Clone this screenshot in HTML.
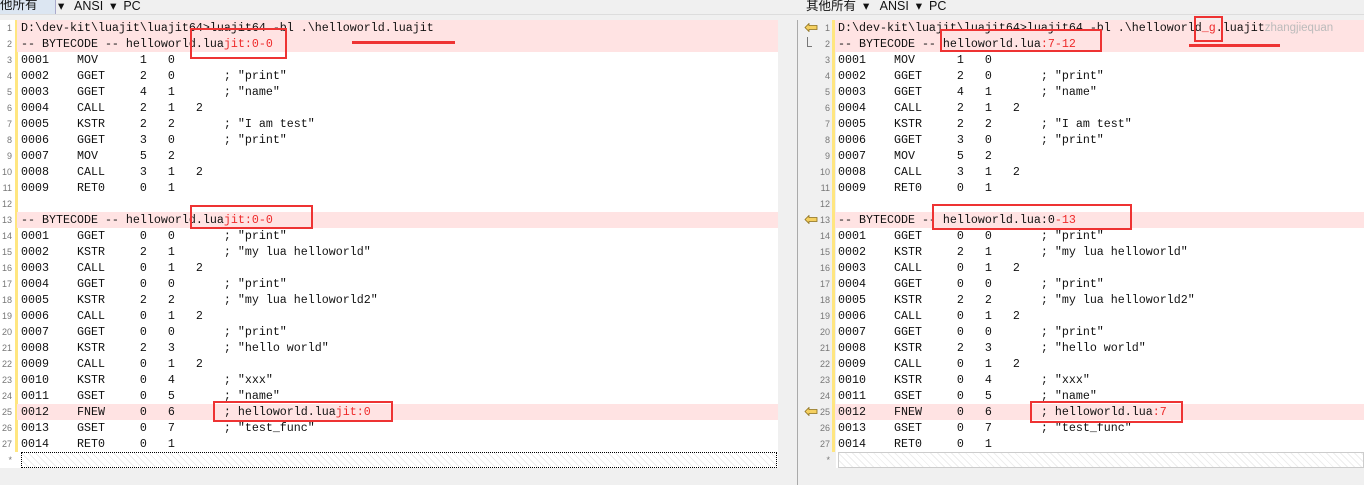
<!DOCTYPE html>
<html><head><meta charset="utf-8"><style>
*{margin:0;padding:0;box-sizing:border-box}
body{width:1364px;height:485px;background:#f0f0f0;position:relative;overflow:hidden;font-family:"Liberation Sans","Noto Sans CJK SC",sans-serif}
.top{position:absolute;top:0;height:14px;font-size:12.5px;color:#111;line-height:12px}
.panel{position:absolute;top:20px;background:#fff;height:448px}
.ln{position:absolute;height:16px;line-height:16px;font-family:"Liberation Mono",monospace;font-size:11.67px;color:#111;white-space:pre}
.pk{background:#ffe3e3}
.num{height:16px;line-height:16px;font-family:"Liberation Sans",sans-serif;font-size:9px;color:#777;text-align:right}
.r{color:#ee2a2a}
.box{position:absolute;border:2.5px solid #ee3333}
.bar{position:absolute;background:#ee3333;height:3px}
.yb{position:absolute;background:#ffe680;width:3px}
.arrow{position:absolute;width:14px;height:9px}
</style></head><body>
<div class="top" style="left:0;width:56px;background:#dce6f2;border-right:1px solid #aac"><span style="position:relative;top:-1px">他所有</span></div>
<div class="top" style="left:58px;">▾ &nbsp; ANSI &nbsp;▾ &nbsp;PC</div>
<div class="top" style="left:806px;">其他所有 &nbsp;▾ &nbsp; ANSI &nbsp;▾ &nbsp;PC</div>
<div style="position:absolute;left:0;top:14px;width:1364px;height:1px;background:#ddd"></div>
<div class="panel" style="left:0;width:778px;"></div>
<div class="yb" style="left:15px;top:20px;height:432px"></div>
<div style="position:absolute;left:797px;top:20px;width:1px;height:465px;background:#aaa"></div>
<div class="panel" style="left:836px;width:528px;"></div>
<div class="yb" style="left:832px;top:20px;height:432px"></div>
<div style="position:absolute;left:21px;top:452px;width:756px;height:16px;border:1px dotted #000;background:repeating-linear-gradient(45deg,#fff 0 4px,#eee 4px 5px)"></div>
<div style="position:absolute;left:838px;top:452px;width:526px;height:16px;border:1px solid #ccc;background:repeating-linear-gradient(45deg,#fff 0 4px,#eee 4px 5px)"></div>

<div class="ln pk" style="left:17px;top:20px;width:761px;padding-left:4px">D:\dev-kit\luajit\luajit64&gt;luajit64 -bl .\helloworld.luajit</div>
<div class="ln pk" style="left:17px;top:36px;width:761px;padding-left:4px">-- BYTECODE -- helloworld.lua<span class="r">jit:0-0</span></div>
<div class="ln" style="left:21px;top:52px">0001    MOV      1   0</div>
<div class="ln" style="left:21px;top:68px">0002    GGET     2   0       ; "print"</div>
<div class="ln" style="left:21px;top:84px">0003    GGET     4   1       ; "name"</div>
<div class="ln" style="left:21px;top:100px">0004    CALL     2   1   2</div>
<div class="ln" style="left:21px;top:116px">0005    KSTR     2   2       ; "I am test"</div>
<div class="ln" style="left:21px;top:132px">0006    GGET     3   0       ; "print"</div>
<div class="ln" style="left:21px;top:148px">0007    MOV      5   2</div>
<div class="ln" style="left:21px;top:164px">0008    CALL     3   1   2</div>
<div class="ln" style="left:21px;top:180px">0009    RET0     0   1</div>
<div class="ln pk" style="left:17px;top:212px;width:761px;padding-left:4px">-- BYTECODE -- helloworld.lua<span class="r">jit:0-0</span></div>
<div class="ln" style="left:21px;top:228px">0001    GGET     0   0       ; "print"</div>
<div class="ln" style="left:21px;top:244px">0002    KSTR     2   1       ; "my lua helloworld"</div>
<div class="ln" style="left:21px;top:260px">0003    CALL     0   1   2</div>
<div class="ln" style="left:21px;top:276px">0004    GGET     0   0       ; "print"</div>
<div class="ln" style="left:21px;top:292px">0005    KSTR     2   2       ; "my lua helloworld2"</div>
<div class="ln" style="left:21px;top:308px">0006    CALL     0   1   2</div>
<div class="ln" style="left:21px;top:324px">0007    GGET     0   0       ; "print"</div>
<div class="ln" style="left:21px;top:340px">0008    KSTR     2   3       ; "hello world"</div>
<div class="ln" style="left:21px;top:356px">0009    CALL     0   1   2</div>
<div class="ln" style="left:21px;top:372px">0010    KSTR     0   4       ; "xxx"</div>
<div class="ln" style="left:21px;top:388px">0011    GSET     0   5       ; "name"</div>
<div class="ln pk" style="left:17px;top:404px;width:761px;padding-left:4px">0012    FNEW     0   6       ; helloworld.lua<span class="r">jit:0</span></div>
<div class="ln" style="left:21px;top:420px">0013    GSET     0   7       ; "test_func"</div>
<div class="ln" style="left:21px;top:436px">0014    RET0     0   1</div>

<div class="ln pk" style="left:835px;top:20px;width:529px;padding-left:3px">D:\dev-kit\luajit\luajit64&gt;luajit64 -bl .\helloworld<span class="r">_g</span>.luajit<span style="color:#bbb;font-family:'Liberation Sans',sans-serif;font-size:11.5px">zhangjiequan</span></div>
<div class="ln pk" style="left:835px;top:36px;width:529px;padding-left:3px">-- BYTECODE -- helloworld.lua<span class="r">:7-12</span></div>
<div class="ln" style="left:838px;top:52px">0001    MOV      1   0</div>
<div class="ln" style="left:838px;top:68px">0002    GGET     2   0       ; "print"</div>
<div class="ln" style="left:838px;top:84px">0003    GGET     4   1       ; "name"</div>
<div class="ln" style="left:838px;top:100px">0004    CALL     2   1   2</div>
<div class="ln" style="left:838px;top:116px">0005    KSTR     2   2       ; "I am test"</div>
<div class="ln" style="left:838px;top:132px">0006    GGET     3   0       ; "print"</div>
<div class="ln" style="left:838px;top:148px">0007    MOV      5   2</div>
<div class="ln" style="left:838px;top:164px">0008    CALL     3   1   2</div>
<div class="ln" style="left:838px;top:180px">0009    RET0     0   1</div>
<div class="ln pk" style="left:835px;top:212px;width:529px;padding-left:3px">-- BYTECODE -- helloworld.lua:0<span class="r">-13</span></div>
<div class="ln" style="left:838px;top:228px">0001    GGET     0   0       ; "print"</div>
<div class="ln" style="left:838px;top:244px">0002    KSTR     2   1       ; "my lua helloworld"</div>
<div class="ln" style="left:838px;top:260px">0003    CALL     0   1   2</div>
<div class="ln" style="left:838px;top:276px">0004    GGET     0   0       ; "print"</div>
<div class="ln" style="left:838px;top:292px">0005    KSTR     2   2       ; "my lua helloworld2"</div>
<div class="ln" style="left:838px;top:308px">0006    CALL     0   1   2</div>
<div class="ln" style="left:838px;top:324px">0007    GGET     0   0       ; "print"</div>
<div class="ln" style="left:838px;top:340px">0008    KSTR     2   3       ; "hello world"</div>
<div class="ln" style="left:838px;top:356px">0009    CALL     0   1   2</div>
<div class="ln" style="left:838px;top:372px">0010    KSTR     0   4       ; "xxx"</div>
<div class="ln" style="left:838px;top:388px">0011    GSET     0   5       ; "name"</div>
<div class="ln pk" style="left:835px;top:404px;width:529px;padding-left:3px">0012    FNEW     0   6       ; helloworld.lua<span class="r">:7</span></div>
<div class="ln" style="left:838px;top:420px">0013    GSET     0   7       ; "test_func"</div>
<div class="ln" style="left:838px;top:436px">0014    RET0     0   1</div>

<div style="position:absolute;left:0;top:20px;width:12px">
<div class="num">1</div><div class="num">2</div><div class="num">3</div><div class="num">4</div><div class="num">5</div><div class="num">6</div><div class="num">7</div><div class="num">8</div><div class="num">9</div><div class="num">10</div><div class="num">11</div><div class="num">12</div><div class="num">13</div><div class="num">14</div><div class="num">15</div><div class="num">16</div><div class="num">17</div><div class="num">18</div><div class="num">19</div><div class="num">20</div><div class="num">21</div><div class="num">22</div><div class="num">23</div><div class="num">24</div><div class="num">25</div><div class="num">26</div><div class="num">27</div><div class="num">*</div>
</div>
<div style="position:absolute;left:814px;top:20px;width:16px">
<div class="num">1</div><div class="num">2</div><div class="num">3</div><div class="num">4</div><div class="num">5</div><div class="num">6</div><div class="num">7</div><div class="num">8</div><div class="num">9</div><div class="num">10</div><div class="num">11</div><div class="num">12</div><div class="num">13</div><div class="num">14</div><div class="num">15</div><div class="num">16</div><div class="num">17</div><div class="num">18</div><div class="num">19</div><div class="num">20</div><div class="num">21</div><div class="num">22</div><div class="num">23</div><div class="num">24</div><div class="num">25</div><div class="num">26</div><div class="num">27</div><div class="num">*</div>
</div>

<svg class="arrow" style="left:804px;top:23px" viewBox="0 0 14 9"><path d="M1 4.5 L5 0.5 L5 2.5 L13 2.5 L13 6.5 L5 6.5 L5 8.5 Z" fill="#f5d060" stroke="#8a6d1a" stroke-width="0.8"/></svg>
<div style="position:absolute;left:807px;top:37px;width:5px;height:10px;border-left:1px solid #777;border-bottom:1px solid #777"></div>
<svg class="arrow" style="left:804px;top:215px" viewBox="0 0 14 9"><path d="M1 4.5 L5 0.5 L5 2.5 L13 2.5 L13 6.5 L5 6.5 L5 8.5 Z" fill="#f5d060" stroke="#8a6d1a" stroke-width="0.8"/></svg>
<svg class="arrow" style="left:804px;top:407px" viewBox="0 0 14 9"><path d="M1 4.5 L5 0.5 L5 2.5 L13 2.5 L13 6.5 L5 6.5 L5 8.5 Z" fill="#f5d060" stroke="#8a6d1a" stroke-width="0.8"/></svg>

<div class="box" style="left:190px;top:28px;width:97px;height:31px"></div>
<div class="bar" style="left:352px;top:41px;width:103px"></div>
<div class="box" style="left:190px;top:205px;width:123px;height:24px"></div>
<div class="box" style="left:213px;top:401px;width:180px;height:21px"></div>
<div class="box" style="left:940px;top:29px;width:162px;height:23px"></div>
<div class="box" style="left:1194px;top:16px;width:29px;height:26px"></div>
<div class="bar" style="left:1189px;top:44px;width:91px"></div>
<div class="box" style="left:932px;top:204px;width:200px;height:26px"></div>
<div class="box" style="left:1030px;top:401px;width:153px;height:22px"></div>
</body></html>
